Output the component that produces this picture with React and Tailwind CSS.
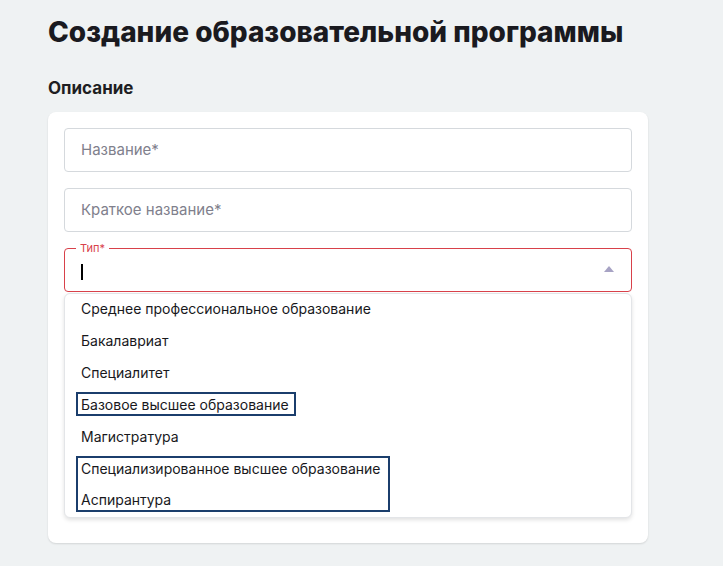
const OPTIONS = [
  { label: "Среднее профессиональное образование" },
  { label: "Бакалавриат" },
  { label: "Специалитет" },
  { label: "Базовое высшее образование", marked: true },
  { label: "Магистратура" },
];

const GROUPED = ["Специализированное высшее образование", "Аспирантура"];

const TextField = ({ placeholder }) => (
  <div className="h-[44px] rounded-[4px] border border-[#d5d9dd] bg-white flex items-center px-4">
    <span className="text-[15px] text-[#80808c]">{placeholder}</span>
  </div>
);

const Option = ({ children }) => (
  <div className="h-[32px] flex items-center px-4 text-[14px] text-[#18181c]">{children}</div>
);

export default function App() {
  return (
    <div
      className="min-h-[566px] bg-[#eff2f3] pl-12 pt-[14px]"
      style={{ fontFamily: "Inter, 'Noto Sans', sans-serif" }}
    >
      <h1 className="text-[28px] leading-[36px] font-extrabold text-[#1a1a1f]">
        Создание образовательной программы
      </h1>
      <h2 className="mt-[27px] text-[17px] leading-[22px] font-bold text-[#1e1e22]">Описание</h2>

      {/* Card */}
      <div className="mt-[13px] w-[600px] rounded-[8px] bg-white shadow-[0_1px_2px_rgba(0,0,0,0.12)] px-4 pt-4 pb-[25px]">
        <div className="flex flex-col gap-4">
          <TextField placeholder="Название*" />
          <TextField placeholder="Краткое название*" />

          {/* Select */}
          <div>
            <div className="relative h-[44px] rounded-[4px] border border-[#d8414a] flex items-center px-4">
              <span className="absolute -top-[8px] left-[11px] bg-white px-[4px] text-[11px] leading-[14px] text-[#d8414a]">
                Тип*
              </span>
              <span className="block w-[2px] h-[16px] mt-[4px] bg-black" />
              <div className="ml-auto mr-[1px] mt-[-2px]">
                <svg width="10" height="6" viewBox="0 0 10 6">
                  <path d="M5 0 L10 6 L0 6 Z" fill="#a7a3c4" />
                </svg>
              </div>
            </div>

            {/* Menu */}
            <div className="mt-[1px] rounded-[6px] bg-white border border-[#e3e5e8] shadow-[0_2px_4px_rgba(0,0,0,0.12)] pb-[5px]">
              <div className="-mt-[2px]">
                {OPTIONS.map((o) =>
                  o.marked ? (
                    <div key={o.label} className="h-[32px] flex items-center pl-[11px]">
                      <span className="h-[24px] flex items-center border-2 border-[#1b3e6c] pl-[3px] pr-[5px] text-[14px] text-[#18181c]">
                        {o.label}
                      </span>
                    </div>
                  ) : (
                    <Option key={o.label}>{o.label}</Option>
                  )
                )}
              </div>
              <div className="pl-[11px] mt-[4px]">
                <div className="inline-flex flex-col gap-[10px] h-[56px] border-2 border-[#1b3e6c] pl-[3px] pr-[8px]">
                  {GROUPED.map((g) => (
                    <div key={g} className="h-[22px] flex items-center text-[14px] text-[#18181c]">
                      {g}
                    </div>
                  ))}
                </div>
              </div>
            </div>
          </div>
        </div>
      </div>
    </div>
  );
}
